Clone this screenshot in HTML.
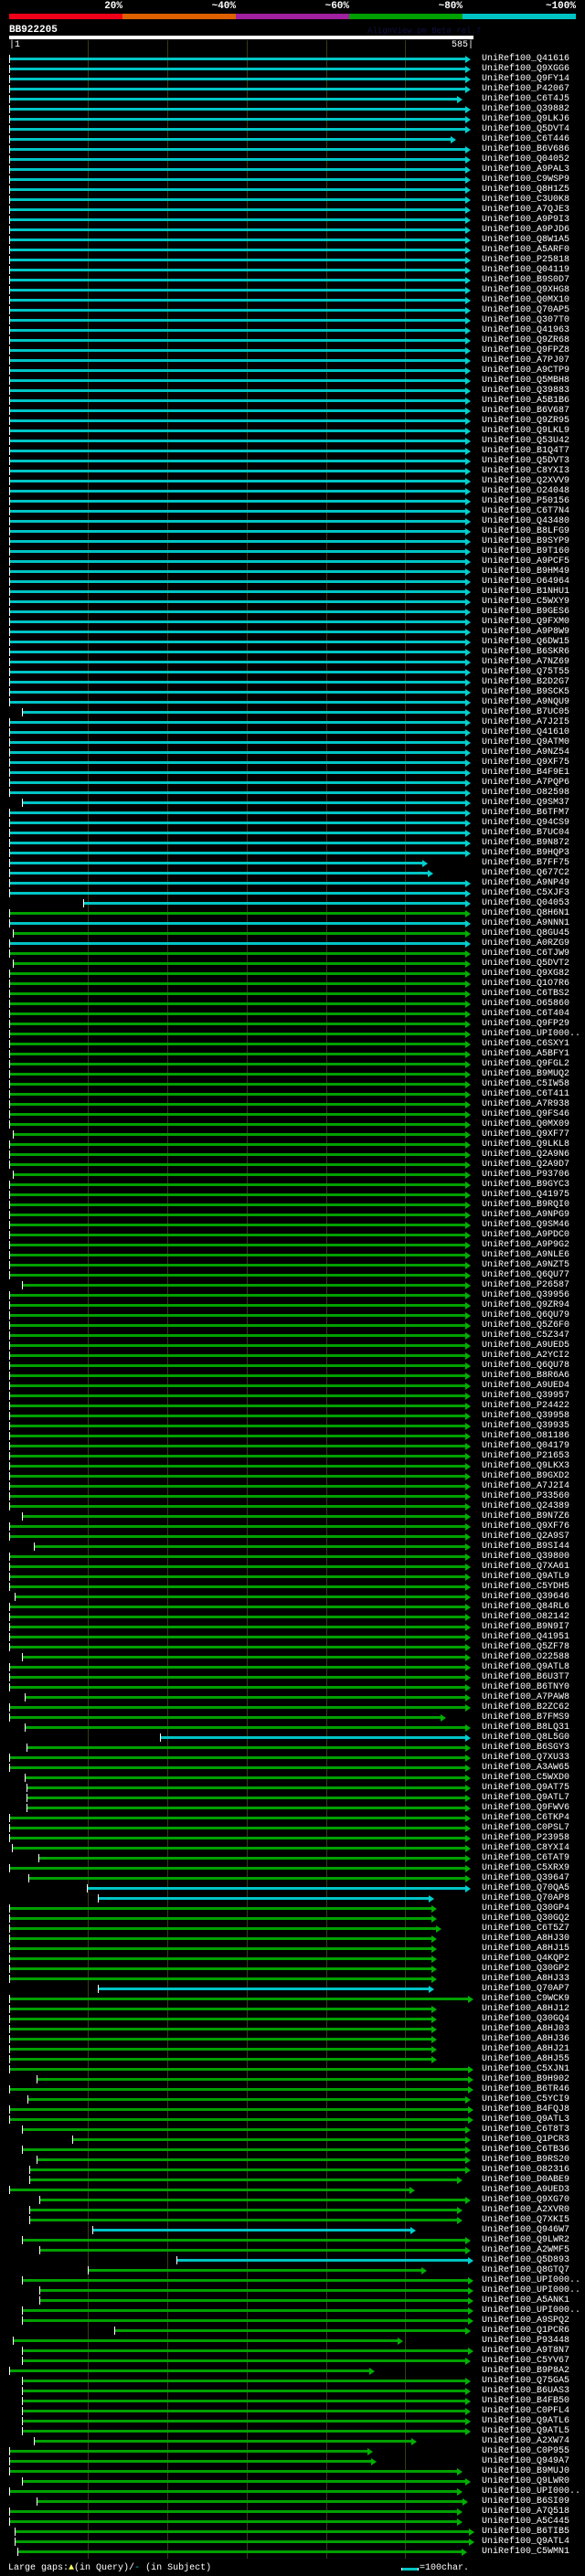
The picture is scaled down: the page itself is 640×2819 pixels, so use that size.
<!DOCTYPE html>
<html><head><meta charset="utf-8"><style>
*{margin:0;padding:0}
body{width:640px;height:2819px;background:#000;position:relative;overflow:hidden;font-family:"Liberation Mono","DejaVu Sans Mono",monospace;color:#fff}
.pct{position:absolute;top:2px;font-weight:bold;font-size:11px;line-height:11px;text-align:right;width:60px}
.cb{position:absolute;top:15px;height:6px;width:124px}
.gl{position:absolute;top:44px;height:2756px;width:1px;background:#3a3a12}
#rows{position:absolute;top:58px;left:0;width:640px}
#rows p{position:relative;height:11px;font-size:10px;line-height:13px;padding-left:527px;white-space:nowrap}
#rows i{position:absolute;top:5px;height:3px;left:10px;width:499px;background:#00a000}
#rows i.c{background:#00c4c4}
#rows i::before{content:"";position:absolute;left:0;top:-3px;width:1px;height:9px;background:#fff}
#rows i::after{content:"";position:absolute;right:-6px;top:-2.5px;border-left:6px solid #00b000;border-top:4px solid transparent;border-bottom:4px solid transparent}
#rows i.c::after{border-left-color:#00d0d0}
</style></head><body>
<div class="pct" style="left:74px">20%</div>
<div class="pct" style="left:198px">~40%</div>
<div class="pct" style="left:322px">~60%</div>
<div class="pct" style="left:446px">~80%</div>
<div class="pct" style="left:570px">~100%</div>
<div class="cb" style="left:10px;background:#f00018"></div>
<div class="cb" style="left:134px;background:#e06000"></div>
<div class="cb" style="left:258px;background:#a020a0"></div>
<div class="cb" style="left:382px;background:#00a000"></div>
<div class="cb" style="left:506px;background:#00c4c4"></div>
<div style="position:absolute;left:10px;top:27px;font-weight:bold;font-size:11px">BB922205</div>
<div style="position:absolute;left:402px;top:29px;font-size:9px;color:#101040">AlignView.pm Beta rel.7</div>
<div style="position:absolute;left:10px;top:39px;width:508px;height:4px;background:#fff"></div>
<div style="position:absolute;left:10px;top:44px;font-size:10px;line-height:11px">|1</div>
<div style="position:absolute;left:494px;top:44px;font-size:10px;line-height:11px">585|</div>
<div class="gl" style="left:96px"></div><div class="gl" style="left:183px"></div><div class="gl" style="left:270px"></div><div class="gl" style="left:357px"></div><div class="gl" style="left:443px"></div>
<div id="rows">
<p><i class="c"></i>UniRef100_Q41616</p>
<p><i class="c"></i>UniRef100_Q9XGG6</p>
<p><i class="c"></i>UniRef100_Q9FY14</p>
<p><i class="c"></i>UniRef100_P42067</p>
<p><i class="c" style="width:490px"></i>UniRef100_C6T4J5</p>
<p><i class="c"></i>UniRef100_Q39882</p>
<p><i class="c"></i>UniRef100_Q9LKJ6</p>
<p><i class="c"></i>UniRef100_Q5DVT4</p>
<p><i class="c" style="width:483px"></i>UniRef100_C6T446</p>
<p><i class="c"></i>UniRef100_B6V686</p>
<p><i class="c"></i>UniRef100_Q04052</p>
<p><i class="c"></i>UniRef100_A9PAL3</p>
<p><i class="c"></i>UniRef100_C9WSP9</p>
<p><i class="c"></i>UniRef100_Q8H1Z5</p>
<p><i class="c"></i>UniRef100_C3U0K8</p>
<p><i class="c"></i>UniRef100_A7QJE3</p>
<p><i class="c"></i>UniRef100_A9P9I3</p>
<p><i class="c"></i>UniRef100_A9PJD6</p>
<p><i class="c"></i>UniRef100_Q8W1A5</p>
<p><i class="c"></i>UniRef100_A5ARF0</p>
<p><i class="c"></i>UniRef100_P25818</p>
<p><i class="c"></i>UniRef100_Q04119</p>
<p><i class="c"></i>UniRef100_B9S0D7</p>
<p><i class="c"></i>UniRef100_Q9XHG8</p>
<p><i class="c"></i>UniRef100_Q0MX10</p>
<p><i class="c"></i>UniRef100_Q70AP5</p>
<p><i class="c"></i>UniRef100_Q307T0</p>
<p><i class="c"></i>UniRef100_Q41963</p>
<p><i class="c"></i>UniRef100_Q9ZR68</p>
<p><i class="c"></i>UniRef100_Q9FPZ8</p>
<p><i class="c"></i>UniRef100_A7PJ07</p>
<p><i class="c"></i>UniRef100_A9CTP9</p>
<p><i class="c"></i>UniRef100_Q5MBH8</p>
<p><i class="c"></i>UniRef100_Q39883</p>
<p><i class="c"></i>UniRef100_A5B1B6</p>
<p><i class="c"></i>UniRef100_B6V687</p>
<p><i class="c"></i>UniRef100_Q9ZR95</p>
<p><i class="c"></i>UniRef100_Q9LKL9</p>
<p><i class="c"></i>UniRef100_Q53U42</p>
<p><i class="c"></i>UniRef100_B1Q4T7</p>
<p><i class="c"></i>UniRef100_Q5DVT3</p>
<p><i class="c"></i>UniRef100_C8YXI3</p>
<p><i class="c"></i>UniRef100_Q2XVV9</p>
<p><i class="c"></i>UniRef100_O24048</p>
<p><i class="c"></i>UniRef100_P50156</p>
<p><i class="c"></i>UniRef100_C6T7N4</p>
<p><i class="c"></i>UniRef100_Q43480</p>
<p><i class="c"></i>UniRef100_B8LFG9</p>
<p><i class="c"></i>UniRef100_B9SYP9</p>
<p><i class="c"></i>UniRef100_B9T160</p>
<p><i class="c"></i>UniRef100_A9PCF5</p>
<p><i class="c"></i>UniRef100_B9HM49</p>
<p><i class="c"></i>UniRef100_O64964</p>
<p><i class="c"></i>UniRef100_B1NHU1</p>
<p><i class="c"></i>UniRef100_C5WXY9</p>
<p><i class="c"></i>UniRef100_B9GES6</p>
<p><i class="c"></i>UniRef100_Q9FXM0</p>
<p><i class="c"></i>UniRef100_A9P8W9</p>
<p><i class="c"></i>UniRef100_Q6DW15</p>
<p><i class="c"></i>UniRef100_B6SKR6</p>
<p><i class="c"></i>UniRef100_A7NZ69</p>
<p><i class="c"></i>UniRef100_Q75T55</p>
<p><i class="c"></i>UniRef100_B2D2G7</p>
<p><i class="c"></i>UniRef100_B9SCK5</p>
<p><i class="c"></i>UniRef100_A9NQU9</p>
<p><i class="c" style="left:24px;width:485px"></i>UniRef100_B7UC05</p>
<p><i class="c"></i>UniRef100_A7J2I5</p>
<p><i class="c"></i>UniRef100_Q41610</p>
<p><i class="c"></i>UniRef100_Q9ATM0</p>
<p><i class="c"></i>UniRef100_A9NZ54</p>
<p><i class="c"></i>UniRef100_Q9XF75</p>
<p><i class="c"></i>UniRef100_B4F9E1</p>
<p><i class="c"></i>UniRef100_A7PQP6</p>
<p><i class="c"></i>UniRef100_O82598</p>
<p><i class="c" style="left:24px;width:485px"></i>UniRef100_Q9SM37</p>
<p><i class="c"></i>UniRef100_B6TFM7</p>
<p><i class="c"></i>UniRef100_Q94CS9</p>
<p><i class="c"></i>UniRef100_B7UC04</p>
<p><i class="c"></i>UniRef100_B9N872</p>
<p><i class="c"></i>UniRef100_B9HQP3</p>
<p><i class="c" style="width:452px"></i>UniRef100_B7FF75</p>
<p><i class="c" style="width:458px"></i>UniRef100_Q677C2</p>
<p><i class="c"></i>UniRef100_A9NP49</p>
<p><i class="c"></i>UniRef100_C5XJF3</p>
<p><i class="c" style="left:91px;width:418px"></i>UniRef100_Q04053</p>
<p><i></i>UniRef100_Q8H6N1</p>
<p><i class="c"></i>UniRef100_A9NNN1</p>
<p><i style="left:14px;width:495px"></i>UniRef100_Q8GU45</p>
<p><i class="c"></i>UniRef100_A0RZG9</p>
<p><i></i>UniRef100_C6TJW9</p>
<p><i style="left:14px;width:495px"></i>UniRef100_Q5DVT2</p>
<p><i></i>UniRef100_Q9XG82</p>
<p><i></i>UniRef100_Q1O7R6</p>
<p><i></i>UniRef100_C6TBS2</p>
<p><i></i>UniRef100_O65860</p>
<p><i></i>UniRef100_C6T404</p>
<p><i></i>UniRef100_Q9FP29</p>
<p><i></i>UniRef100_UPI000..</p>
<p><i></i>UniRef100_C6SXY1</p>
<p><i></i>UniRef100_A5BFY1</p>
<p><i></i>UniRef100_Q9FGL2</p>
<p><i></i>UniRef100_B9MUQ2</p>
<p><i></i>UniRef100_C5IW58</p>
<p><i></i>UniRef100_C6T411</p>
<p><i></i>UniRef100_A7R938</p>
<p><i></i>UniRef100_Q9FS46</p>
<p><i></i>UniRef100_Q0MX09</p>
<p><i style="left:14px;width:495px"></i>UniRef100_Q9XF77</p>
<p><i></i>UniRef100_Q9LKL8</p>
<p><i></i>UniRef100_Q2A9N6</p>
<p><i></i>UniRef100_Q2A9D7</p>
<p><i style="left:14px;width:495px"></i>UniRef100_P93706</p>
<p><i></i>UniRef100_B9GYC3</p>
<p><i></i>UniRef100_Q41975</p>
<p><i></i>UniRef100_B9RQI0</p>
<p><i></i>UniRef100_A9NPG9</p>
<p><i></i>UniRef100_Q9SM46</p>
<p><i></i>UniRef100_A9PDC0</p>
<p><i></i>UniRef100_A9P9G2</p>
<p><i></i>UniRef100_A9NLE6</p>
<p><i></i>UniRef100_A9NZT5</p>
<p><i></i>UniRef100_Q6QU77</p>
<p><i style="left:24px;width:485px"></i>UniRef100_P26587</p>
<p><i></i>UniRef100_Q39956</p>
<p><i></i>UniRef100_Q9ZR94</p>
<p><i></i>UniRef100_Q6QU79</p>
<p><i></i>UniRef100_Q5Z6F0</p>
<p><i></i>UniRef100_C5Z347</p>
<p><i></i>UniRef100_A9UED5</p>
<p><i></i>UniRef100_A2YCI2</p>
<p><i></i>UniRef100_Q6QU78</p>
<p><i></i>UniRef100_B8R6A6</p>
<p><i></i>UniRef100_A9UED4</p>
<p><i></i>UniRef100_Q39957</p>
<p><i></i>UniRef100_P24422</p>
<p><i></i>UniRef100_Q39958</p>
<p><i></i>UniRef100_Q39935</p>
<p><i></i>UniRef100_O81186</p>
<p><i></i>UniRef100_Q04179</p>
<p><i></i>UniRef100_P21653</p>
<p><i></i>UniRef100_Q9LKX3</p>
<p><i></i>UniRef100_B9GXD2</p>
<p><i></i>UniRef100_A7J2I4</p>
<p><i></i>UniRef100_P33560</p>
<p><i></i>UniRef100_Q24389</p>
<p><i style="left:24px;width:485px"></i>UniRef100_B9N7Z6</p>
<p><i></i>UniRef100_Q9XF76</p>
<p><i></i>UniRef100_Q2A9S7</p>
<p><i style="left:37px;width:472px"></i>UniRef100_B9SI44</p>
<p><i></i>UniRef100_Q39800</p>
<p><i></i>UniRef100_Q7XA61</p>
<p><i></i>UniRef100_Q9ATL9</p>
<p><i></i>UniRef100_C5YDH5</p>
<p><i style="left:16px;width:493px"></i>UniRef100_Q39646</p>
<p><i></i>UniRef100_Q84RL6</p>
<p><i></i>UniRef100_O82142</p>
<p><i></i>UniRef100_B9N9I7</p>
<p><i></i>UniRef100_Q41951</p>
<p><i></i>UniRef100_Q5ZF78</p>
<p><i style="left:24px;width:485px"></i>UniRef100_O22588</p>
<p><i></i>UniRef100_Q9ATL8</p>
<p><i></i>UniRef100_B6U3T7</p>
<p><i></i>UniRef100_B6TNY0</p>
<p><i style="left:27px;width:482px"></i>UniRef100_A7PAW8</p>
<p><i></i>UniRef100_B2ZC62</p>
<p><i style="width:472px"></i>UniRef100_B7FMS9</p>
<p><i style="left:27px;width:482px"></i>UniRef100_B8LQ31</p>
<p><i class="c" style="left:175px;width:334px"></i>UniRef100_Q8L5G0</p>
<p><i style="left:29px;width:480px"></i>UniRef100_B6SGY3</p>
<p><i></i>UniRef100_Q7XU33</p>
<p><i></i>UniRef100_A3AW65</p>
<p><i style="left:27px;width:482px"></i>UniRef100_C5WXD0</p>
<p><i style="left:29px;width:480px"></i>UniRef100_Q9AT75</p>
<p><i style="left:29px;width:480px"></i>UniRef100_Q9ATL7</p>
<p><i style="left:29px;width:480px"></i>UniRef100_Q9FWV6</p>
<p><i></i>UniRef100_C6TKP4</p>
<p><i></i>UniRef100_C0PSL7</p>
<p><i></i>UniRef100_P23958</p>
<p><i style="left:13px;width:496px"></i>UniRef100_C8YXI4</p>
<p><i style="left:42px;width:467px"></i>UniRef100_C6TAT9</p>
<p><i></i>UniRef100_C5XRX9</p>
<p><i style="left:31px;width:478px"></i>UniRef100_Q39647</p>
<p><i class="c" style="left:95px;width:414px"></i>UniRef100_Q70QA5</p>
<p><i class="c" style="left:107px;width:362px"></i>UniRef100_Q70AP8</p>
<p><i style="width:462px"></i>UniRef100_Q30GP4</p>
<p><i style="width:462px"></i>UniRef100_Q30GQ2</p>
<p><i style="width:467px"></i>UniRef100_C6T5Z7</p>
<p><i style="width:462px"></i>UniRef100_A8HJ30</p>
<p><i style="width:462px"></i>UniRef100_A8HJ15</p>
<p><i style="width:462px"></i>UniRef100_Q4KQP2</p>
<p><i style="width:462px"></i>UniRef100_Q30GP2</p>
<p><i style="width:462px"></i>UniRef100_A8HJ33</p>
<p><i class="c" style="left:107px;width:362px"></i>UniRef100_Q70AP7</p>
<p><i style="width:502px"></i>UniRef100_C9WCK9</p>
<p><i style="width:462px"></i>UniRef100_A8HJ12</p>
<p><i style="width:462px"></i>UniRef100_Q30GQ4</p>
<p><i style="width:462px"></i>UniRef100_A8HJ03</p>
<p><i style="width:462px"></i>UniRef100_A8HJ36</p>
<p><i style="width:462px"></i>UniRef100_A8HJ21</p>
<p><i style="width:462px"></i>UniRef100_A8HJ55</p>
<p><i style="width:502px"></i>UniRef100_C5XJN1</p>
<p><i style="left:40px;width:472px"></i>UniRef100_B9H902</p>
<p><i style="width:502px"></i>UniRef100_B6TR46</p>
<p><i style="left:30px;width:479px"></i>UniRef100_C5YCI9</p>
<p><i style="width:502px"></i>UniRef100_B4FQJ8</p>
<p><i style="width:502px"></i>UniRef100_Q9ATL3</p>
<p><i style="left:24px;width:485px"></i>UniRef100_C6T8T3</p>
<p><i style="left:79px;width:430px"></i>UniRef100_Q1PCR3</p>
<p><i style="left:24px;width:485px"></i>UniRef100_C6TB36</p>
<p><i style="left:40px;width:469px"></i>UniRef100_B9RS20</p>
<p><i style="left:32px;width:477px"></i>UniRef100_O82316</p>
<p><i style="left:32px;width:468px"></i>UniRef100_D0ABE9</p>
<p><i style="width:438px"></i>UniRef100_A9UED3</p>
<p><i style="left:43px;width:466px"></i>UniRef100_Q9XG70</p>
<p><i style="left:32px;width:468px"></i>UniRef100_A2XVR0</p>
<p><i style="left:32px;width:468px"></i>UniRef100_Q7XKI5</p>
<p><i class="c" style="left:101px;width:348px"></i>UniRef100_Q946W7</p>
<p><i style="left:24px;width:485px"></i>UniRef100_Q9LWR2</p>
<p><i style="left:43px;width:466px"></i>UniRef100_A2WMF5</p>
<p><i class="c" style="left:193px;width:319px"></i>UniRef100_Q5D893</p>
<p><i style="left:96px;width:365px"></i>UniRef100_Q8GTQ7</p>
<p><i style="left:24px;width:488px"></i>UniRef100_UPI000..</p>
<p><i style="left:43px;width:469px"></i>UniRef100_UPI000..</p>
<p><i style="left:43px;width:469px"></i>UniRef100_A5ANK1</p>
<p><i style="left:24px;width:488px"></i>UniRef100_UPI000..</p>
<p><i style="left:24px;width:488px"></i>UniRef100_A9SPQ2</p>
<p><i style="left:125px;width:384px"></i>UniRef100_Q1PCR6</p>
<p><i style="left:14px;width:421px"></i>UniRef100_P93448</p>
<p><i style="left:24px;width:488px"></i>UniRef100_A9T8N7</p>
<p><i style="left:24px;width:485px"></i>UniRef100_C5YV67</p>
<p><i style="width:394px"></i>UniRef100_B9P8A2</p>
<p><i style="left:24px;width:485px"></i>UniRef100_Q75GA5</p>
<p><i style="left:24px;width:485px"></i>UniRef100_B6UAS3</p>
<p><i style="left:24px;width:485px"></i>UniRef100_B4FB50</p>
<p><i style="left:24px;width:485px"></i>UniRef100_C0PFL4</p>
<p><i style="left:24px;width:485px"></i>UniRef100_Q9ATL6</p>
<p><i style="left:24px;width:485px"></i>UniRef100_Q9ATL5</p>
<p><i style="left:37px;width:413px"></i>UniRef100_A2XW74</p>
<p><i style="width:392px"></i>UniRef100_C0P955</p>
<p><i style="width:396px"></i>UniRef100_Q949A7</p>
<p><i style="width:490px"></i>UniRef100_B9MUJ0</p>
<p><i style="left:24px;width:485px"></i>UniRef100_Q9LWR0</p>
<p><i style="width:490px"></i>UniRef100_UPI000..</p>
<p><i style="left:40px;width:466px"></i>UniRef100_B6SI09</p>
<p><i style="width:490px"></i>UniRef100_A7Q518</p>
<p><i style="width:490px"></i>UniRef100_A5C445</p>
<p><i style="left:16px;width:497px"></i>UniRef100_B6TIB5</p>
<p><i style="left:16px;width:497px"></i>UniRef100_Q9ATL4</p>
<p><i style="left:19px;width:486px"></i>UniRef100_C5WMN1</p>
</div>
<div style="position:absolute;left:9px;top:2805px;font-size:10px;line-height:12px">Large gaps:<span style="color:#ff6">▲</span>(in Query)/<span style="color:#0cc">-</span> (in Subject)</div>
<div style="position:absolute;left:439px;top:2810px;width:17px;height:3px;background:#00c4c4;border-left:1px solid #fff;border-right:1px solid #fff"></div>
<div style="position:absolute;left:459px;top:2805px;font-size:10px;line-height:12px">=100char.</div>
</body></html>
